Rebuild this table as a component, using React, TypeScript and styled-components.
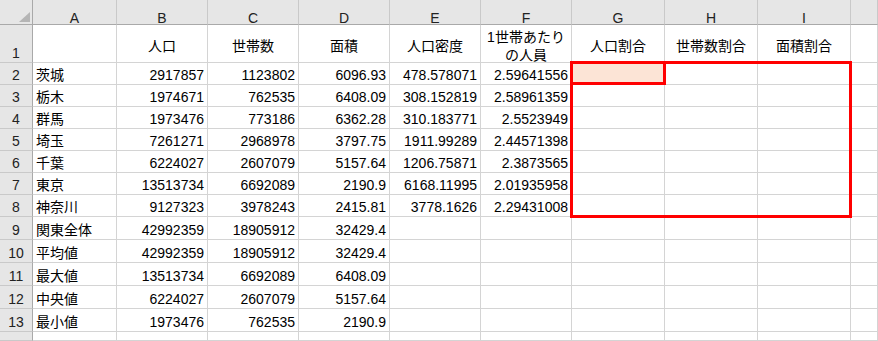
import React from "react";
import styled, { createGlobalStyle } from "styled-components";

const GlobalStyle = createGlobalStyle`
  html, body {
    margin: 0;
    padding: 0;
    background: #ffffff;
  }
  body {
    font-family: "Liberation Sans", "Noto Sans CJK JP", sans-serif;
  }
`;

const Sheet = styled.div`
  position: relative;
  display: grid;
  grid-template-columns: 33px 84px repeat(5, 91px) repeat(3, 93px) 1fr;
  grid-template-rows: 25px 38px repeat(7, 22px) repeat(5, 23px) 1fr;
  width: 878px;
  height: 341px;
  overflow: hidden;
  font-size: 14px;
  color: #000000;
  background: #ffffff;
`;

const Corner = styled.div`
  box-sizing: border-box;
  background: #e6e6e6;
  border-right: 1px solid #a9a9a9;
  border-bottom: 1px solid #a9a9a9;
  display: flex;
  align-items: flex-end;
  justify-content: flex-end;
  padding: 0 2px 2px 0;
`;

const ColHeader = styled.div`
  box-sizing: border-box;
  background: #e6e6e6;
  border-right: 1px solid #c9c9c9;
  border-bottom: 1px solid #a9a9a9;
  display: flex;
  align-items: flex-end;
  justify-content: center;
  line-height: 12px;
  color: #222222;
  overflow: hidden;
`;

const RowHeader = styled.div`
  box-sizing: border-box;
  background: #e6e6e6;
  border-right: 1px solid #a9a9a9;
  border-bottom: 1px solid #c9c9c9;
  display: flex;
  align-items: flex-end;
  justify-content: center;
  line-height: 18px;
  color: #222222;
`;

const Cell = styled.div<{ $align?: "left" | "right"; $active?: boolean }>`
  box-sizing: border-box;
  border-right: 1px solid #d4d4d4;
  border-bottom: 1px solid #d4d4d4;
  background: ${(p) => (p.$active ? "#fce4d6" : "#ffffff")};
  display: flex;
  align-items: flex-end;
  justify-content: ${(p) => (p.$align === "right" ? "flex-end" : "flex-start")};
  padding: 0 3px;
  line-height: 18px;
  white-space: nowrap;
  overflow: hidden;
`;

const TitleCell = styled.div`
  box-sizing: border-box;
  border-right: 1px solid #d4d4d4;
  border-bottom: 1px solid #d4d4d4;
  display: flex;
  align-items: center;
  justify-content: center;
  text-align: center;
  padding: 4px 3px 0;
  line-height: 18px;
  white-space: pre-line;
`;

const Selection = styled.div<{ $left: number; $top: number; $w: number; $h: number }>`
  position: absolute;
  left: ${(p) => p.$left}px;
  top: ${(p) => p.$top}px;
  width: ${(p) => p.$w}px;
  height: ${(p) => p.$h}px;
  box-sizing: border-box;
  border: 3px solid #ff0000;
  pointer-events: none;
`;

const columns = ["A", "B", "C", "D", "E", "F", "G", "H", "I", ""];

const titles = [
  "",
  "人口",
  "世帯数",
  "面積",
  "人口密度",
  "1世帯あたり\nの人員",
  "人口割合",
  "世帯数割合",
  "面積割合",
  "",
];

const rows: string[][] = [
  ["茨城", "2917857", "1123802", "6096.93", "478.578071", "2.59641556"],
  ["栃木", "1974671", "762535", "6408.09", "308.152819", "2.58961359"],
  ["群馬", "1973476", "773186", "6362.28", "310.183771", "2.5523949"],
  ["埼玉", "7261271", "2968978", "3797.75", "1911.99289", "2.44571398"],
  ["千葉", "6224027", "2607079", "5157.64", "1206.75871", "2.3873565"],
  ["東京", "13513734", "6692089", "2190.9", "6168.11995", "2.01935958"],
  ["神奈川", "9127323", "3978243", "2415.81", "3778.1626", "2.29431008"],
  ["関東全体", "42992359", "18905912", "32429.4"],
  ["平均値", "42992359", "18905912", "32429.4"],
  ["最大値", "13513734", "6692089", "6408.09"],
  ["中央値", "6224027", "2607079", "5157.64"],
  ["最小値", "1973476", "762535", "2190.9"],
  [],
];

const CornerMark = () => (
  <svg width="11" height="10" viewBox="0 0 11 10">
    <polygon points="11,0 11,10 0,10" fill="#b5b5b5" />
  </svg>
);

export default function App() {
  return (
    <>
      <GlobalStyle />
      <Sheet>
        <Corner>
          <CornerMark />
        </Corner>
        {columns.map((c, i) => (
          <ColHeader key={`h${i}`}>{c}</ColHeader>
        ))}

        <RowHeader>1</RowHeader>
        {titles.map((t, i) => (
          <TitleCell key={`t${i}`}>{t}</TitleCell>
        ))}

        {rows.map((r, ri) => (
          <React.Fragment key={`r${ri}`}>
            <RowHeader>{ri < 12 ? ri + 2 : ""}</RowHeader>
            {columns.map((_, ci) => (
              <Cell
                key={`c${ri}-${ci}`}
                $align={ci === 0 ? "left" : "right"}
                $active={ri === 0 && ci === 6}
              >
                {r[ci] ?? ""}
              </Cell>
            ))}
          </React.Fragment>
        ))}

        <Selection $left={570} $top={61} $w={282} $h={157} />
        <Selection $left={570} $top={61} $w={96} $h={24} />
      </Sheet>
    </>
  );
}
